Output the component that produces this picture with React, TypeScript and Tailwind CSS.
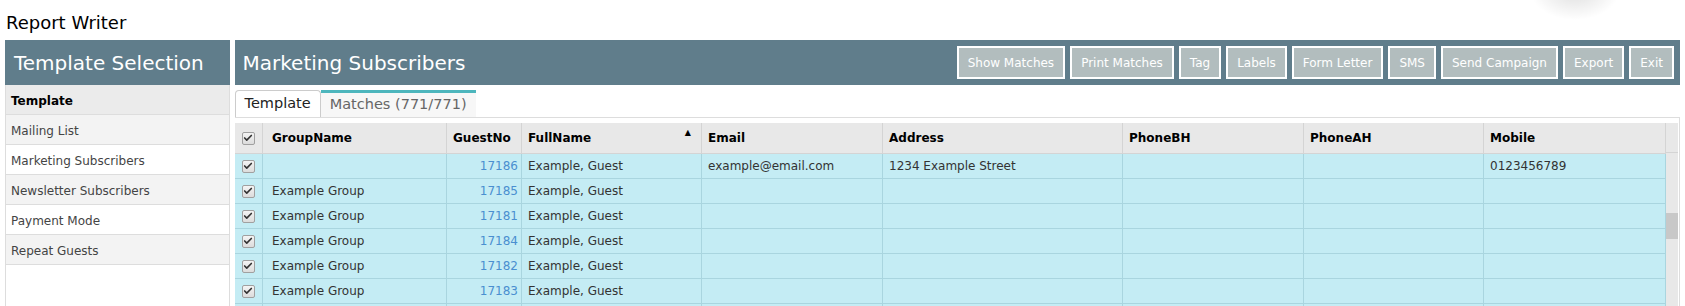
import { Check } from 'lucide-react';

const templates = [
  { name: 'Template', bold: true, bg: 'bg-[#ebebeb]' },
  { name: 'Mailing List', bg: 'bg-[#f3f3f3]' },
  { name: 'Marketing Subscribers', bg: 'bg-white' },
  { name: 'Newsletter Subscribers', bg: 'bg-[#f3f3f3]' },
  { name: 'Payment Mode', bg: 'bg-white' },
  { name: 'Repeat Guests', bg: 'bg-[#f3f3f3]' },
];

const actions = ['Show Matches', 'Print Matches', 'Tag', 'Labels', 'Form Letter', 'SMS', 'Send Campaign', 'Export', 'Exit'];

const columns = [
  { key: 'group', label: 'GroupName', w: 'w-[184px] pl-[9px]' },
  { key: 'no', label: 'GuestNo', w: 'w-[75px] px-[6px]' },
  { key: 'name', label: 'FullName', w: 'w-[180px] px-[6px]', sort: true },
  { key: 'email', label: 'Email', w: 'w-[181px] px-[6px]' },
  { key: 'address', label: 'Address', w: 'w-[240px] px-[6px]' },
  { key: 'bh', label: 'PhoneBH', w: 'w-[181px] px-[6px]' },
  { key: 'ah', label: 'PhoneAH', w: 'w-[180px] px-[6px]' },
  { key: 'mobile', label: 'Mobile', w: 'w-[182px] px-[6px]' },
];

const guests = [
  { group: '', no: '17186', name: 'Example, Guest', email: 'example@email.com', address: '1234 Example Street', mobile: '0123456789' },
  { group: 'Example Group', no: '17185', name: 'Example, Guest' },
  { group: 'Example Group', no: '17181', name: 'Example, Guest' },
  { group: 'Example Group', no: '17184', name: 'Example, Guest' },
  { group: 'Example Group', no: '17182', name: 'Example, Guest' },
  { group: 'Example Group', no: '17183', name: 'Example, Guest' },
  { group: 'Example Group', no: '17180', name: 'Example, Guest' },
];

function Tick() {
  return (
    <span className="inline-flex h-[13px] w-[13px] items-center justify-center rounded-[2px] border border-[#a0a0a0] bg-gradient-to-b from-[#f4f4f4] to-[#dcdcdc] align-middle">
      <Check className="h-[10px] w-[10px] text-[#333]" strokeWidth={4} />
    </span>
  );
}

export default function App() {
  return (
    <div className="relative h-[306px] overflow-hidden bg-white font-['DejaVu_Sans',sans-serif] text-[#333]">
      <div className="pointer-events-none absolute left-[1530px] top-[-40px] h-[60px] w-[90px] bg-[radial-gradient(closest-side,rgba(0,0,0,0.13),rgba(0,0,0,0))]" />

      <h1 className="px-[6px] pt-[11px] pb-[6px] text-[18px] leading-[23px] text-black">Report Writer</h1>

      <div className="flex gap-[5px] px-[5px]">
        <div className="flex w-[225px] flex-col">
          <div className="flex h-[45px] items-center bg-[#607d8b] px-[9px] text-[20px] text-white">Template Selection</div>
          <div className="min-h-[300px] border-x border-[#dddddd]">
            {templates.map((t) => (
              <div
                key={t.name}
                className={`flex h-[30px] items-center border-b border-[#dddddd] px-[5px] pt-[2px] text-[12px] ${t.bg} ${t.bold ? 'font-bold text-black' : 'text-[#444]'}`}
              >
                {t.name}
              </div>
            ))}
          </div>
        </div>

        <div className="flex flex-1 flex-col">
          <div className="flex h-[45px] items-center justify-between bg-[#607d8b] pl-[8px] pr-[6px]">
            <span className="text-[20px] text-white">Marketing Subscribers</span>
            <div className="flex gap-[5px]">
              {actions.map((a) => (
                <button
                  key={a}
                  className="h-[33px] border-2 border-white bg-[#b2bdbe] px-[9px] text-[12px] text-white"
                >
                  {a}
                </button>
              ))}
            </div>
          </div>

          <div className="mt-[5px] flex h-[28px] items-end border-b border-[#dddddd]">
            <div className="flex h-[27px] items-center rounded-t-[4px] border border-b-0 border-[#cccccc] bg-white px-[9px] text-[14.5px] whitespace-nowrap text-[#222]">
              Template
            </div>
            <div className="flex h-[27px] items-center border-t-[3px] border-[#4db6bd] bg-[#f7f7f7] px-[9px] text-[14.5px] whitespace-nowrap text-[#666]">
              Matches (771/771)
            </div>
          </div>

          <div className="flex border-r border-[#dddddd] pt-[5px] pr-[1px]">
            <table className="w-[1431px] table-fixed border-collapse text-[12px]">
              <thead>
                <tr className="h-[30px] bg-[#e8e8e8] text-left text-black">
                  <th className="w-[28px] border-r border-b border-[#d4d4d4] text-center font-normal">
                    <Tick />
                  </th>
                  {columns.map((c) => (
                    <th key={c.key} className={`${c.w} relative border-r border-b border-[#d4d4d4] font-bold`}>
                      {c.label}
                      {c.sort && <span className="absolute right-[10px] top-[4px] text-[8px]">▲</span>}
                    </th>
                  ))}
                </tr>
              </thead>
              <tbody>
                {guests.map((g) => (
                  <tr key={g.no} className="h-[25px] bg-[#c4ecf4]">
                    <td className="border-r border-b border-[#a9d5df] text-center">
                      <Tick />
                    </td>
                    <td className="border-r border-b border-[#a9d5df] pl-[9px]">{g.group}</td>
                    <td className="border-r border-b border-[#a9d5df] px-[3px] text-right text-[#4a8fd0]">{g.no}</td>
                    <td className="border-r border-b border-[#a9d5df] px-[6px]">{g.name}</td>
                    <td className="border-r border-b border-[#a9d5df] px-[6px]">{g.email}</td>
                    <td className="border-r border-b border-[#a9d5df] px-[6px]">{g.address}</td>
                    <td className="border-r border-b border-[#a9d5df] px-[6px]" />
                    <td className="border-r border-b border-[#a9d5df] px-[6px]" />
                    <td className="border-r border-b border-[#a9d5df] px-[6px]">{g.mobile}</td>
                  </tr>
                ))}
              </tbody>
            </table>
            <div className="flex w-[12px] flex-col bg-[#e8e8e8]">
              <div className="h-[30px] border-b border-[#d4d4d4]" />
              <div className="mt-[60px] h-[26px] bg-[#c8c8c8]" />
            </div>
          </div>
        </div>
      </div>
    </div>
  );
}
